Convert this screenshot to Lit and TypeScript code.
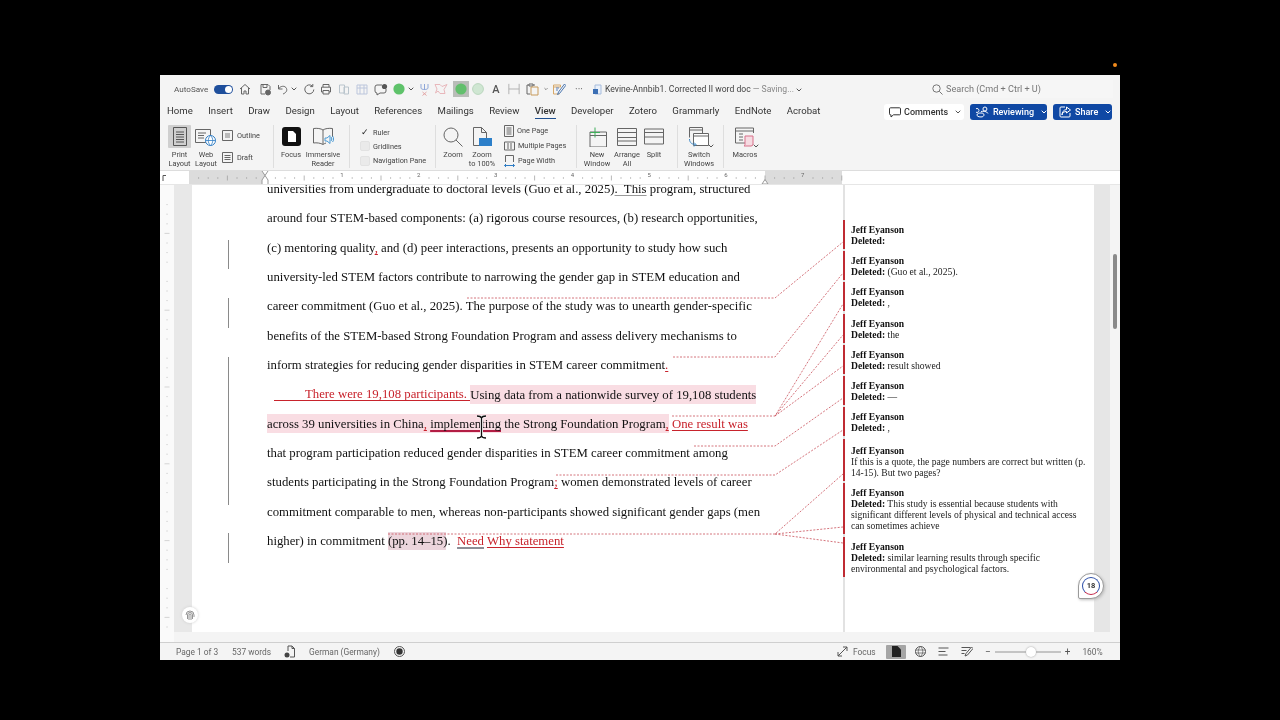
import { LitElement, css, html, svg } from "lit";
import { customElement } from "lit/decorators.js";

const ic = (w: number, h: number, body: unknown) => html`<svg width=${w} height=${h} viewBox="0 0 ${w} ${h}" fill="none" stroke="#666" stroke-width="1">${body}</svg>`;

const chev = html`<svg width="6" height="4" viewBox="0 0 6 4" fill="none" stroke="#555" stroke-width="1"><path d="M.7.7 3 3l2.3-2.3" /></svg>`;

const qat = [
  [18, ic(12, 12, svg`<path d="M1 6 6 1.5 11 6M2.5 5v6h2.5V8h2v3h2.5V5" />`)],
  [22, ic(13, 13, svg`<path d="M2 1.5h7l2 2V7M2 1.5V11h4M4 1.5v3h4v-3" /><circle cx="9" cy="9.5" r="2.5" fill="#666" />`)],
  [12, ic(11, 11, svg`<path d="M1.5 1v4h4M1.5 5C3 2 8 1 9.5 4.5c1 2.6-1 4.5-3.5 5.5" />`)],
  [12, chev],
  [18, ic(12, 12, svg`<path d="M9.5 3.2A4.5 4.5 0 1 0 10.8 6.5M9.8 1v2.6H7.2" />`)],
  [16, ic(12, 12, svg`<path d="M3 4V1.5h6V4M3 9H1.5V4.2h9V9H9M3 7.5h6V11H3z" />`)],
  [20, ic(12, 12, svg`<g stroke="#b9c4cc"><path d="M1.5 2h5v8h-5zM6 4h4.5v7H6z" /></g>`)],
  [16, ic(12, 11, svg`<g stroke="#bcc6dc"><path d="M1 1h10v9H1zM1 4h10M4 1v9M8 1v9" /></g>`)],
  [22, ic(14, 13, svg`<path d="M8 2H3a2 2 0 0 0-2 2v4a2 2 0 0 0 2 2v2l3-2h4a2 2 0 0 0 2-2V6" /><circle cx="10.5" cy="3.5" r="2.6" fill="#555" stroke="none" />`)],
  [14, html`<svg width="12" height="12" viewBox="0 0 12 12"><circle cx="6" cy="6" r="5.6" fill="#5ec26a" /></svg>`],
  [10, chev],
  [16, ic(11, 13, svg`<g stroke="#8fa7d8"><path d="M2 1v4c0 2 7 2 7 0V1M5.5 1v6" /></g><path d="M3.5 9l4 3.5M7.5 9l-4 3.5" stroke="#e2a4a4" />`)],
  [18, ic(14, 12, svg`<path d="M1 1.5h5l2 2 5-2-3 5 1 4H6L4 8 1.5 10 3 6z" stroke="#e8b7bb" />`)],
  [22, html`<span class="greenbox"><svg width="12" height="12" viewBox="0 0 12 12"><circle cx="6" cy="6" r="5.6" fill="#62bf6c" /></svg></span>`],
  [12, html`<svg width="12" height="12" viewBox="0 0 12 12"><circle cx="6" cy="6" r="5.4" fill="#cfe6d2" stroke="#b9d6bd" /></svg>`],
  [24, html`<span class="qa">A</span>`],
  [12, ic(14, 12, svg`<g stroke="#a8a8a8"><path d="M1 0v12M13 0v12M1 6h12" /></g>`)],
  [24, ic(13, 14, svg`<path d="M3 3H1v9h3M9 3h-2M3 2h4v2H3z" /><path d="M5 5h7v8H5z" stroke="#c79a5a" />`)],
  [4, chev],
  [22, ic(14, 14, svg`<path d="M1.5 3h7v2h-7zM1.5 3v9h6" stroke="#d7a96a" /><path d="M4 6h3M4 8h2" stroke="#5a7fb8" /><path d="m12.5 2-6 8-1 2.5 2.2-1.2 6-7.8z" stroke="#4d78b0" />`)],
  [18, html`<span class="dots">···</span>`],
  [18, ic(11, 11, svg`<path d="M3 1h6v9H3z" stroke="#a6bcdc" fill="#e9f0fa" /><path d="M1 5h5v5H1z" fill="#3c6fb4" stroke="none" />`)],
] as const;

const tabs = ["Home", "Insert", "Draw", "Design", "Layout", "References", "Mailings", "Review", "View", "Developer", "Zotero", "Grammarly", "EndNote", "Acrobat"];

const big = (w: number, label: string[], icon: unknown, selected = false) => html`
  <div class="big" style="width:${w}px">
    <div class="big-icon ${selected ? "sel" : ""}">${icon}</div>
    <div class="big-label">${label.map((l) => html`<div>${l}</div>`)}</div>
  </div>
`;

const small = (icon: unknown, label: string) => html`<div class="small">${icon}<span>${label}</span></div>`;

type Seg = string | [string, string];

const lines: Seg[][] = [
  ["universities from undergraduate to doctoral levels (Guo et al., 2025)", ["greyul", ".  This"], " program, structured"],
  ["around four STEM-based components: (a) rigorous course resources, (b) research opportunities,"],
  ["(c) mentoring quality", ["ins", ","], " and (d) peer interactions, presents an opportunity to study how such"],
  ["university-led STEM factors contribute to narrowing the gender gap in STEM education and"],
  ["career commitment (Guo et al., 2025). The purpose of the study was to unearth gender-specific"],
  ["benefits of the STEM-based Strong Foundation Program and assess delivery mechanisms to"],
  ["inform strategies for reducing gender disparities in STEM career commitment", ["ins", "."]],
  [["lead", ""], ["ins", "There were 19,108 participants. "], ["pink", "Using data from a nationwide survey of 19,108 students"]],
  [["pink", "across 39 universities in China"], ["pinkins", ","], ["pink", " "], ["pinkcom", "implementing"], ["pink", " the Strong Foundation Program"], ["pinkins", ","], " ", ["ins", "One result was"]],
  ["that program participation reduced gender disparities in STEM career commitment among"],
  ["students participating in the Strong Foundation Program", ["ins", ";"], " women demonstrated levels of career"],
  ["commitment comparable to men, whereas non-participants showed significant gender gaps (men"],
  ["higher) in commitment ", ["cite", "(pp. 14–15"], ").  ", ["insgrey", "Need"], " ", ["ins", "Why statement"]],
];

const balloons: { del: string; comment?: boolean; wide?: boolean }[] = [
  { del: "" },
  { del: "(Guo et al., 2025)." },
  { del: "," },
  { del: "the" },
  { del: "result showed" },
  { del: "—" },
  { del: "," },
  { del: "If this is a quote, the page numbers are correct but written (p. 14-15). But two pages?", comment: true, wide: true },
  { del: "This study is essential because students with significant different levels of physical and technical access can sometimes achieve" },
  { del: "similar learning results through specific environmental and psychological factors." },
];

// page coordinates: x - 192, y - 185
const leaders = [
  "M275 113H583L651 57",
  "M481 172H583L651 88",
  "M480 231H583L651 119",
  "M583 231L651 150",
  "M583 231L651 181",
  "M502 261H583L651 213",
  "M364 290H583L651 245",
  "M196 349H583L651 289",
  "M583 349L651 342",
  "M583 349L651 358",
];
const changeBars = [[55, 29], [113, 30], [172, 148], [348, 30]];

function rulerTicks() {
  let d = "";
  for (let x = 29; x < 682; x += 9.6) {
    const i = Math.round((x - 29) / 9.6);
    const h = i % 8 === 0 ? 0 : i % 4 === 0 ? 2.5 : 0.8;
    if (h) d += `M${x.toFixed(1)} ${7 - h}v${h * 2}`;
  }
  return d;
}

function vTicks() {
  let d = "";
  for (let y = 10; y < 450; y += 9.6) {
    const i = Math.round((y - 10) / 9.6);
    const w = i % 8 === 0 ? 0 : i % 4 === 0 ? 5 : 1.5;
    if (w) d += `M${(7 - w / 2).toFixed(1)} ${y.toFixed(1)}h${w}`;
  }
  return d;
}

@customElement("app-root")
export class AppRoot extends LitElement {
  render() {
    return html`
      <div class="dot"></div>
      <div class="window">
        <div class="titlebar">
          <span class="autosave">AutoSave</span>
          <span class="toggle"></span>
          ${qat.map(([w, i]) => html`<span class="qcell" style="width:${w}px">${i}</span>`)}
          <span class="doc">Kevine-Annbib1. Corrected II word doc <em>— Saving...</em></span>
          <span class="docchev">${chev}</span>
          <div class="search">
            <svg width="11" height="11" viewBox="0 0 11 11" fill="none" stroke="#777"><circle cx="4.5" cy="4.5" r="3.7" /><path d="m7.3 7.3 3.2 3.2" /></svg>
            <span>Search (Cmd + Ctrl + U)</span>
          </div>
        </div>

        <div class="tabbar">
          ${tabs.map((t) => html`<span class="tab ${t === "View" ? "active" : ""}">${t}</span>`)}
          <div class="actions">
            <button class="btn light">
              <svg width="12" height="11" viewBox="0 0 12 11" fill="none" stroke="#333"><path d="M1.5.8h9a1 1 0 0 1 1 1v5a1 1 0 0 1-1 1H4.5L2 10V7.8h-.5a1 1 0 0 1-1-1v-5a1 1 0 0 1 1-1z" /></svg>
              <span class="blabel">Comments</span><span class="bchev">${chev}</span>
            </button>
            <button class="btn blue rev">
              <svg width="13" height="12" viewBox="0 0 13 12" fill="none" stroke="#fff"><circle cx="9" cy="3" r="2" /><path d="M5 5.5c2-.5 6-.5 7 2M5 11c-3 0-4-1-4-2 0-1.5 2-2 4-2s3 .5 3 2c0 1-1 2-3 2zM3 4.5a2 2 0 1 1 0-.1" /></svg>
              <span>Reviewing</span><span class="bchev white">${chev}</span>
            </button>
            <button class="btn blue share">
              <svg width="12" height="12" viewBox="0 0 12 12" fill="none" stroke="#fff"><path d="M6 1H2a1 1 0 0 0-1 1v8a1 1 0 0 0 1 1h8a1 1 0 0 0 1-1V7M7.5 1l4 3-4 3V5.5C5 5.5 3.5 6.5 3 9c0-3 1.5-5 4.5-5.5z" /></svg>
              <span>Share</span><span class="bchev white">${chev}</span>
            </button>
          </div>
        </div>

        <div class="ribbon">
          <div class="group g1">
            ${big(25, ["Print", "Layout"], ic(14, 19, svg`<path d="M.5.5h13v18H.5zM3 5h8M3 7.5h8M3 10h8M3 12.5h8M3 15h8" stroke="#555" />`), true)}
            ${big(28, ["Web", "Layout"], html`<svg width="22" height="20" viewBox="0 0 22 20" fill="none" stroke="#666"><path d="M.5 2.5h15v13H.5zM3 6h8M3 8.5h6M3 11h6" /><circle cx="15.5" cy="13.5" r="5" fill="#fff" stroke="#2e7cc4" /><path d="M10.5 13.5h10M15.5 8.5c-3 3-3 7 0 10M15.5 8.5c3 3 3 7 0 10" stroke="#2e7cc4" stroke-width=".8" /></svg>`)}
            <div class="stack views">
              ${small(ic(11, 11, svg`<path d="M.5.5h10v10H.5z" /><path d="M3 3h5v5H3z" fill="#bbb" stroke="none" />`), "Outline")}
              ${small(ic(11, 11, svg`<path d="M.5.5h10v10H.5zM2.5 3.5h6M2.5 5.5h6M2.5 7.5h6" />`), "Draft")}
            </div>
          </div>
          <div class="group g2">
            ${big(24, ["Focus"], html`<svg width="19" height="19" viewBox="0 0 19 19"><rect width="19" height="19" rx="3" fill="#111" /><path d="M6 4h5l3 3v8H6z" fill="#fff" /></svg>`)}
            ${big(40, ["Immersive", "Reader"], html`<svg width="21" height="20" viewBox="0 0 21 20" fill="none" stroke="#666"><path d="M10 3C8 1.5 4 1 .5 1.5V16c3-.5 7 0 9.5 1.5 1-.7 2-1.2 3-1.5M10 3c2-1.5 6-2 9.5-1.5V10M10 3v14" /><path d="M12 11h2l3-2.5v8L14 14h-2zM18 10c1 1 1 3 0 4M19.5 9c1.5 1.5 1.5 4.5 0 6" stroke="#4a9ad4" /></svg>`)}
          </div>
          <div class="group g3">
            <div class="check"><span class="box on">✓</span>Ruler</div>
            <div class="check"><span class="box"></span>Gridlines</div>
            <div class="check"><span class="box"></span>Navigation Pane</div>
          </div>
          <div class="group g4">
            ${big(24, ["Zoom"], html`<svg width="20" height="20" viewBox="0 0 20 20" fill="none" stroke="#666"><circle cx="8" cy="8" r="7" /><path d="m13 13 6.5 6.5" /></svg>`)}
            ${big(32, ["Zoom", "to 100%"], html`<svg width="20" height="20" viewBox="0 0 20 20" fill="none" stroke="#666"><path d="M1.5.5h8l5 5v13h-13zM9.5.5v5h5" /><rect x="7" y="11" width="13" height="8" fill="#2c7fc9" stroke="none" /></svg>`)}
            <div class="stack pages">
              ${small(ic(10, 12, svg`<path d="M.5.5h9v11h-9zM2.5 3h5M2.5 5h5M2.5 7h5M2.5 9h5" />`), "One Page")}
              ${small(ic(11, 10, svg`<path d="M.5 1h10v8H.5zM4 2v6M7 2v6" />`), "Multiple Pages")}
              ${small(ic(11, 12, svg`<path d="M1.5 7V.5h8V7" /><path d="M.5 10.5h10M2 9l-1.5 1.5L2 12M9 9l1.5 1.5L9 12" stroke="#2e7cc4" />`), "Page Width")}
            </div>
          </div>
          <div class="group g5">
            ${big(30, ["New", "Window"], html`<svg width="20" height="20" viewBox="0 0 20 20" fill="none" stroke="#666"><path d="M3 5h16.5v15H3zM3 8.5h16.5" /><path d="M8 .5v10M3 5.5h10" stroke="#3fae5a" /></svg>`)}
            ${big(28, ["Arrange", "All"], html`<svg width="20" height="20" viewBox="0 0 20 20" fill="none" stroke="#666"><path d="M.5 1.5h19v17H.5zM.5 5.5h19M.5 10.5h19M.5 14h19" /></svg>`)}
            ${big(24, ["Split"], html`<svg width="20" height="20" viewBox="0 0 20 20" fill="none" stroke="#666"><path d="M.5 2h19v15H.5zM.5 5.5h19M.5 10h19" /></svg>`)}
          </div>
          <div class="group g6">
            <div class="withchev">
              ${big(36, ["Switch", "Windows"], html`<svg width="22" height="20" viewBox="0 0 22 20" fill="none" stroke="#666"><path d="M1.5.5h13v6M1.5.5v10M1.5 3h13" /><path d="M5.5 6.5h15v12h-15zM5.5 9h15" fill="#fff" /><path d="M1.5 12c0 4 3 5.5 6 5.5M6 15.5l2 2-2 2" stroke="#3f8ccb" /></svg>`)}
              <span class="rchev">${chev}</span>
            </div>
          </div>
          <div class="group g7">
            <div class="withchev">
              ${big(36, ["Macros"], html`<svg width="20" height="20" viewBox="0 0 20 20" fill="none" stroke="#666"><path d="M.5 1h18v5M.5 1v15h10M.5 4h18M4 7h4M4 10h4M4 13h4" /><path d="M10 9h8v8a2 2 0 0 1-2 2h-7c1-1 1-1 1-2z" stroke="#d8708a" fill="#f6dbe2" /></svg>`)}
              <span class="rchev m">${chev}</span>
            </div>
          </div>
        </div>

        <div class="ruler">
          <svg class="hruler" width="960" height="14" viewBox="0 0 960 14" fill="none">
            <path d="M3 10V4.5h3" stroke="#555" />
            <rect x="29" width="76" height="14" fill="#dcdcdc" />
            <rect x="605" width="77" height="14" fill="#dcdcdc" />
            <path d=${rulerTicks()} stroke="#999" stroke-width=".7" />
            ${["1", "2", "3", "4", "5", "6", "7"].map((n, i) => svg`<text x=${182 + i * 76.8} y="6" font-size="6" text-anchor="middle" fill="#666" font-family="Roboto, sans-serif" stroke="none">${n}</text>`)}
            <path d="M102 0l3 4.5L108 0M102 9l3-4.5L108 9v5h-6z" stroke="#999" fill="#fff" />
            <path d="M602 13l3-4.5 3 4.5z" stroke="#999" fill="#fff" />
          </svg>
        </div>

        <div class="docarea">
          <div class="vruler">
            <svg width="14" height="457" viewBox="0 0 14 457" fill="none">
              <path d=${vTicks()} stroke="#c4c4c4" stroke-width=".7" />
            </svg>
          </div>
          <div class="gutter"></div>
          <div class="page">
            <div class="textcol">
              ${lines.map((segs) => html`<div class="line">${segs.map((s) => (typeof s === "string" ? s : html`<span class=${s[0]}>${s[1]}</span>`))}</div>`)}
            </div>
            <div class="markup">
              ${balloons.map((b) => html`
                <div class="balloon ${b.wide ? "wide" : ""}">
                  <b>Jeff Eyanson</b><br />
                  ${b.comment ? "" : html`<b>Deleted:</b> `}${b.del}
                </div>
              `)}
            </div>
            <svg class="leaders" width="651" height="447" viewBox="0 0 651 447" fill="none" stroke="#c9505a" stroke-width=".8" stroke-dasharray="2 1.5">
              ${leaders.map((d) => svg`<path d=${d} />`)}
            </svg>
            ${changeBars.map(([top, h]) => html`<span class="changebar" style="top:${top}px;height:${h}px"></span>`)}
            <svg class="ibeam" width="11" height="24" viewBox="0 0 11 24" fill="none">
              <path d="M1 1c2 0 4 .5 4.5 2v18c-.5 1.5-2.5 2-4.5 2M10 1c-2 0-4 .5-4.5 2v18c.5 1.5 2.5 2 4.5 2" stroke="#fff" stroke-width="3" />
              <path d="M1 1c2 0 4 .5 4.5 2v18c-.5 1.5-2.5 2-4.5 2M10 1c-2 0-4 .5-4.5 2v18c.5 1.5 2.5 2 4.5 2" stroke="#111" stroke-width="1.3" />
            </svg>
          </div>
          <div class="rightgutter"></div>
          <div class="scroll"><span class="thumb"></span></div>
          <div class="fingerprint">
            <svg width="10" height="11" viewBox="0 0 10 11" fill="none" stroke="#777" stroke-width=".8"><path d="M1 5a4 4 0 0 1 8 0v2M2.5 9V5a2.5 2.5 0 0 1 5 0v4M4 10V5a1 1 0 0 1 2 0v5" /></svg>
          </div>
          <div class="badge"><span class="ring">18</span></div>
        </div>

        <div class="status">
          <span class="st page-count">Page 1 of 3</span>
          <span class="st words">537 words</span>
          <span class="st-icon">
            <svg width="11" height="13" viewBox="0 0 11 13" fill="none" stroke="#555"><path d="M4 1h4l2.5 2.5V12H6M4 1v5M8 1v2.5h2.5" /><circle cx="3" cy="10" r="2.5" fill="#444" stroke="none" /></svg>
          </span>
          <span class="st lang">German (Germany)</span>
          <span class="st-icon rec">
            <svg width="11" height="11" viewBox="0 0 11 11"><circle cx="5.5" cy="5.5" r="5" fill="none" stroke="#555" /><circle cx="5.5" cy="5.5" r="3.2" fill="#333" /></svg>
          </span>
          <div class="st-right">
            <svg width="11" height="11" viewBox="0 0 11 11" fill="none" stroke="#555"><path d="M1 10 10 1M6 1h4v4M1 6v4h4" /></svg>
            <span class="st focus">Focus</span>
            <span class="viewbtn"><svg width="9" height="11" viewBox="0 0 9 11"><path d="M0 0h5.5L9 3.5V11H0z" fill="#222" /></svg></span>
            <svg class="vi globe" width="11" height="11" viewBox="0 0 11 11" fill="none" stroke="#555"><circle cx="5.5" cy="5.5" r="5" /><path d="M.5 4h10M.5 7h10M5.5.5c-3 3-3 7 0 10M5.5.5c3 3 3 7 0 10" stroke-width=".7" /></svg>
            <svg class="vi" width="11" height="9" viewBox="0 0 11 9" fill="none" stroke="#555"><path d="M.5 1h10M.5 4.5h7M.5 8h9" /></svg>
            <svg class="vi" width="12" height="11" viewBox="0 0 12 11" fill="none" stroke="#555"><path d="M.5 1.5h9M.5 4.5h5M.5 7.5h3M4 10l1-2.5L10.5 1 12 2.5 6.5 9z" /></svg>
            <span class="zm minus">−</span>
            <div class="slider"><span class="knob"></span></div>
            <span class="zm plus">+</span>
            <span class="st pct">160%</span>
          </div>
        </div>
      </div>
    `;
  }

  static styles = css`
    :host {
      display: block;
      width: 1280px;
      height: 720px;
      background: #000;
      position: relative;
      overflow: hidden;
      font-family: Roboto, "Liberation Sans", sans-serif;
      color: #333;
    }

    .dot {
      position: absolute;
      left: 1113px;
      top: 63px;
      width: 4px;
      height: 4px;
      border-radius: 50%;
      background: #f08a1c;
    }

    .window {
      position: absolute;
      left: 160px;
      top: 75px;
      width: 960px;
      height: 585px;
      background: #f4f4f4;
      display: flex;
      flex-direction: column;
      filter: blur(0.35px);
    }

    .titlebar {
      height: 28px;
      flex: none;
      display: flex;
      align-items: center;
      padding-left: 14px;
      font-size: 8.1px;
    }
    .autosave {
      width: 40px;
      color: #555;
    }
    .toggle {
      width: 19px;
      height: 9px;
      border-radius: 5px;
      background: #1f4f9c;
      position: relative;
      margin-right: 3px;
    }
    .toggle::after {
      content: "";
      position: absolute;
      right: 1px;
      top: 1px;
      width: 7px;
      height: 7px;
      border-radius: 50%;
      background: #fff;
    }
    .qcell {
      display: flex;
      justify-content: center;
      align-items: center;
      flex: none;
    }
    .greenbox {
      width: 16px;
      height: 16px;
      background: #b9bdb8;
      display: flex;
      align-items: center;
      justify-content: center;
      flex: none;
    }
    .qa {
      font-size: 11px;
      font-weight: 500;
      color: #555;
    }
    .dots {
      font-size: 10px;
      color: #666;
    }
    .doc {
      margin-left: -1px;
      font-size: 8.6px;
      color: #444;
      white-space: nowrap;
      width: 188px;
    }
    .doc em {
      font-style: normal;
      color: #888;
    }
    .docchev {
      margin-left: 3px;
    }
    .search {
      position: absolute;
      left: 770px;
      top: 5px;
      width: 183px;
      height: 18px;
      display: flex;
      align-items: center;
      gap: 3px;
      padding-left: 2px;
      box-sizing: border-box;
      color: #777;
      font-size: 9.1px;
      background: #f6f6f6;
    }

    .tabbar {
      height: 19px;
      flex: none;
      display: flex;
      gap: 15.4px;
      padding-left: 7px;
      position: relative;
      font-size: 9.6px;
      color: #333;
    }
    .tab {
      height: 16px;
      line-height: 16px;
      position: relative;
    }
    .tab.active {
      font-weight: 500;
    }
    .tab.active::after {
      content: "";
      position: absolute;
      left: 0;
      right: 0;
      bottom: 0;
      height: 1.5px;
      background: #1f4f8f;
    }
    .actions {
      position: absolute;
      left: 724px;
      top: 1px;
      display: flex;
      gap: 6px;
    }
    .btn {
      height: 16px;
      border: 0;
      border-radius: 3px;
      display: flex;
      align-items: center;
      gap: 4px;
      padding: 0 0 0 6px;
      font: 500 9px Roboto, sans-serif;
      box-sizing: border-box;
    }
    .btn.light {
      width: 80px;
      background: #fff;
      color: #333;
      gap: 3px;
      padding-left: 5px;
    }
    .blabel {
      margin-right: 1px;
    }
    .btn.blue {
      background: #0f48a4;
      color: #fff;
    }
    .rev {
      width: 77px;
    }
    .share {
      width: 59px;
    }
    .bchev {
      margin-left: 3px;
      display: flex;
    }
    .bchev.white svg path {
      stroke: #fff;
    }

    .ribbon {
      height: 49px;
      flex: none;
      display: flex;
      padding-left: 7px;
      border-bottom: 1px solid #ddd;
      box-sizing: border-box;
    }
    .group {
      display: flex;
      box-sizing: border-box;
      height: 43px;
      margin-top: 3px;
      border-right: 1px solid #dedede;
    }
    .g1 {
      width: 107px;
    }
    .g2 {
      width: 76px;
      padding-left: 5px;
    }
    .g3 {
      width: 86px;
      padding-left: 10px;
      flex-direction: column;
      font-size: 7.3px;
    }
    .g4 {
      width: 141px;
      padding-left: 5px;
      gap: 1px;
    }
    .g5 {
      width: 101px;
      padding-left: 5px;
      gap: 1px;
    }
    .g6 {
      width: 46px;
      padding-left: 3px;
    }
    .g7 {
      border: 0;
      padding-left: 3px;
    }
    .big {
      display: flex;
      flex-direction: column;
      align-items: center;
      flex: none;
      font-size: 7.4px;
      color: #444;
    }
    .big-icon {
      height: 23px;
      width: 100%;
      display: flex;
      align-items: center;
      justify-content: center;
      flex: none;
    }
    .big-icon.sel {
      width: 23px;
      background: #cfcfcf;
      border-radius: 1px;
    }
    .big-label {
      margin-top: 3px;
      line-height: 8.5px;
      text-align: center;
      white-space: nowrap;
    }
    .stack {
      display: flex;
      flex-direction: column;
      font-size: 7.3px;
      color: #444;
    }
    .views {
      margin-left: 2px;
      gap: 11px;
      padding-top: 5px;
    }
    .pages {
      margin-left: 5px;
      gap: 4px;
      padding-top: 0;
    }
    .pages .small {
      gap: 3px;
    }
    .small {
      display: flex;
      align-items: center;
      gap: 4px;
      height: 11px;
      white-space: nowrap;
    }
    .small svg {
      flex: none;
    }
    .check {
      display: flex;
      align-items: center;
      height: 15px;
      gap: 3px;
      color: #444;
      white-space: nowrap;
    }
    .box {
      width: 10px;
      height: 10px;
      box-sizing: border-box;
      background: #eaeaea;
      border: 1px solid #e2e2e2;
      border-radius: 2px;
      font-size: 9px;
      line-height: 8px;
      color: #222;
      text-align: center;
    }
    .box.on {
      background: transparent;
      border-color: transparent;
    }
    .withchev {
      display: flex;
      position: relative;
    }
    .rchev {
      position: absolute;
      left: 27px;
      top: 8px;
    }
    .rchev.m {
      left: 26px;
    }

    .ruler {
      height: 14px;
      flex: none;
      background: #fff;
      border-bottom: 1px solid #e6e6e6;
      box-sizing: border-box;
      overflow: hidden;
    }
    .hruler {
      display: block;
    }

    .docarea {
      flex: 1;
      min-height: 0;
      display: flex;
      position: relative;
      background: #f4f4f4;
    }
    .vruler {
      width: 14px;
      flex: none;
      background: #fafafa;
      overflow: hidden;
    }
    .gutter {
      width: 18px;
      flex: none;
      background: #e8e8e8;
      height: 447px;
    }
    .page {
      width: 902px;
      height: 447px;
      flex: none;
      background: #fff;
      position: relative;
      overflow: hidden;
      display: flex;
    }
    .textcol {
      width: 651px;
      flex: none;
      box-sizing: border-box;
      padding-left: 75px;
      margin-top: -10px;
      font: 12.77px/29.33px "Liberation Serif", serif;
      color: #111;
      text-decoration-skip-ink: none;
    }
    .line {
      white-space: pre;
      height: 29.33px;
    }
    .ins {
      color: #c8232c;
      text-decoration: underline;
      text-underline-offset: 1.5px;
    }
    .lead {
      display: inline-block;
      width: 31px;
      margin-left: 7px;
      height: 1px;
      background: #c8232c;
      vertical-align: -2.5px;
    }
    .pink,
    .pinkins,
    .pinkcom {
      background: #f9dde3;
      padding: 2.5px 0;
    }
    .pinkins {
      color: #c8232c;
      text-decoration: underline;
      text-underline-offset: 1.5px;
    }
    .pinkcom {
      text-decoration: underline 2px #b31d44;
      text-underline-offset: 2px;
    }
    .greyul {
      text-decoration: underline #999;
      text-underline-offset: 1.5px;
    }
    .insgrey {
      color: #c8232c;
      text-decoration: underline #8d8d96 1.5px;
      text-underline-offset: 1.5px;
    }
    .cite {
      background: #ecd5dc;
      box-shadow: 3px 0 0 #ecd5dc;
      padding: 2px 0;
    }
    .markup {
      flex: 1;
      border-left: 2px solid #e2e2e2;
      padding-top: 35px;
      box-sizing: border-box;
      font: 9.6px/11px "Liberation Serif", serif;
      color: #222;
    }
    .balloon {
      margin: 0 4px 2.2px -2px;
      border-left: 2px solid #bf2b33;
      padding: 4px 0 3px 6px;
    }
    .balloon.wide {
      margin-top: 3px;
      padding-top: 6px;
    }
    .balloon b {
      font-weight: 700;
      color: #111;
    }
    .leaders {
      position: absolute;
      left: 0;
      top: 0;
    }
    .changebar {
      position: absolute;
      left: 36px;
      width: 1px;
      background: #8a8a8a;
    }
    .fingerprint {
      position: absolute;
      left: 22px;
      top: 422px;
      width: 16px;
      height: 16px;
      border-radius: 50%;
      background: #fff;
      box-shadow: 0 0 3px #ccc;
      display: flex;
      align-items: center;
      justify-content: center;
    }
    .badge {
      position: absolute;
      left: 918px;
      top: 388px;
      width: 26px;
      height: 26px;
      border-radius: 50% 50% 50% 2px;
      background: #fff;
      border: 1px solid #9a9a9a;
      box-sizing: border-box;
      display: flex;
      align-items: center;
      justify-content: center;
      box-shadow: 1px 1px 3px #bbb;
    }
    .ring {
      width: 18px;
      height: 18px;
      box-sizing: border-box;
      border-radius: 50%;
      border: 1.5px solid #2b4ea8;
      border-bottom-color: #c2274a;
      font: 700 7.5px/15px Roboto, sans-serif;
      text-align: center;
      color: #333;
    }
    .ibeam {
      position: absolute;
      left: 284px;
      top: 230px;
    }
    .rightgutter {
      width: 16px;
      height: 447px;
      flex: none;
      background: #e6e6e6;
    }
    .scroll {
      flex: 1;
      position: relative;
    }
    .thumb {
      position: absolute;
      left: 3px;
      top: 69px;
      width: 4px;
      height: 75px;
      border-radius: 2px;
      background: #8a8a8a;
    }

    .status {
      height: 18px;
      flex: none;
      display: flex;
      align-items: center;
      border-top: 1px solid #cfcfcf;
      box-sizing: border-box;
      padding-left: 16px;
      font-size: 8.4px;
      color: #666;
      position: relative;
    }
    .st {
      white-space: nowrap;
    }
    .page-count {
      width: 56px;
    }
    .words {
      width: 52px;
    }
    .st-icon {
      display: flex;
      width: 25px;
    }
    .lang {
      width: 85px;
    }
    .st-right {
      position: absolute;
      left: 677px;
      top: 0;
      height: 17px;
      display: flex;
      align-items: center;
    }
    .focus {
      margin-left: 5px;
      width: 33px;
    }
    .viewbtn {
      width: 20px;
      height: 14px;
      border-radius: 1px;
      background: #a5a5a5;
      display: flex;
      align-items: center;
      justify-content: center;
      margin-right: 9px;
    }
    .vi {
      margin-right: 12px;
      flex: none;
    }
    .zm {
      font-size: 10px;
      color: #555;
    }
    .minus {
      margin-right: 4px;
    }
    .slider {
      width: 66px;
      height: 2px;
      background: #c4c4c4;
      position: relative;
      margin-right: 4px;
    }
    .knob {
      position: absolute;
      left: 31px;
      top: -4px;
      width: 10px;
      height: 10px;
      border-radius: 50%;
      background: #fff;
      box-shadow: 0 0 2px #999;
    }
    .pct {
      margin-left: 12px;
    }
  `;
}

declare global {
  interface HTMLElementTagNameMap {
    "app-root": AppRoot;
  }
}
